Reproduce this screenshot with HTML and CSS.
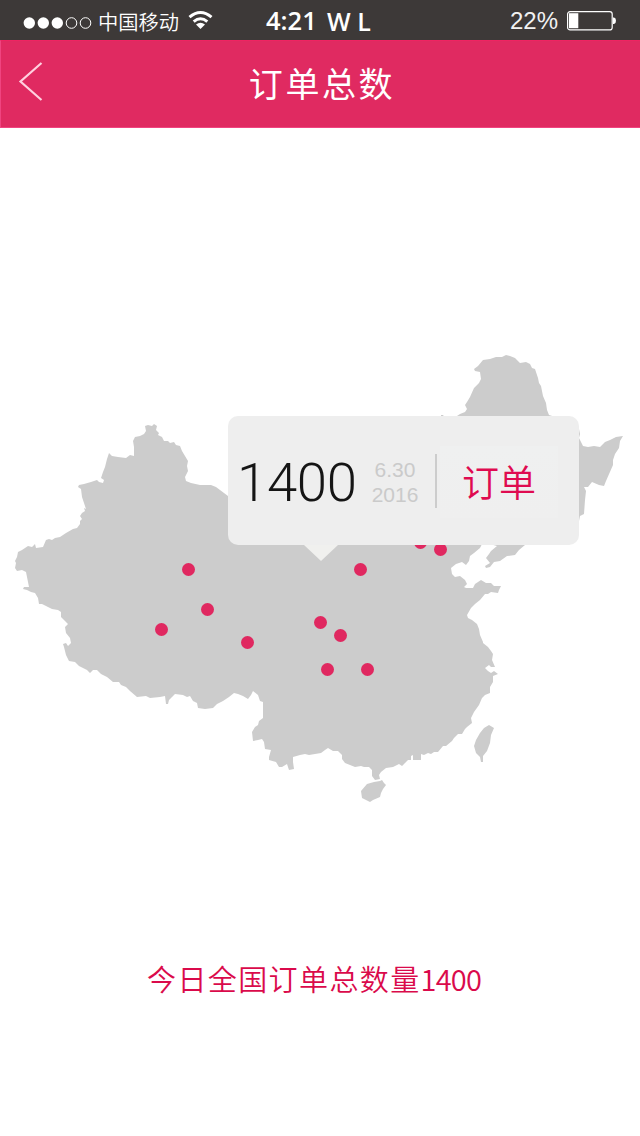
FILE: index.html
```html
<!DOCTYPE html>
<html lang="zh-CN">
<head>
<meta charset="utf-8">
<title>订单总数</title>
<link rel="stylesheet" href="styles.css">
</head>
<body>
<div class="screen">
  <div class="status">
    <svg class="signal" width="70" height="14" viewBox="0 0 70 14">
      <g fill="#fff"><circle cx="7.300" cy="7" r="5.700"/><circle cx="21.300" cy="7" r="5.700"/><circle cx="35.300" cy="7" r="5.700"/></g>
      <g fill="none" stroke="#fff"><circle cx="49.500" cy="7" r="5.300"/><circle cx="63.500" cy="7" r="5.300"/></g>
    </svg>
    <span class="carrier">中国移动</span>
    <svg class="wifi" width="26" height="20" viewBox="0 0 26 20">
      <g fill="none" stroke="#fff" stroke-width="3"><path d="M1.500 7.100Q12.500-2.200 23.500 7.100"/><path d="M5.700 11.600Q12.500 5.900 19.300 11.600"/></g>
      <path d="M8 14.500Q12.500 11 17 14.500L12.500 19Z" fill="#fff"/>
    </svg>
    <span class="time">4:21</span><span class="initials">W L</span>
    <span class="percent">22%</span>
    <svg class="battery" width="50" height="20" viewBox="0 0 50 20">
      <rect x=".6" y=".6" width="44.600" height="18.300" rx="2.500" fill="none" stroke="#fff" stroke-width="1.200"/>
      <rect x="2" y="2.200" width="9.300" height="15" fill="#fff"/>
      <path d="M46 6.500h1q2 .5 2 3.200t-2 3.300h-1z" fill="#fff"/>
    </svg>
  </div>
  <header class="header">
    <svg class="back" width="26" height="42" viewBox="0 0 26 42"><path d="M23.500 2L2.500 20.500 23.500 39" fill="none" stroke="#ffd0df" stroke-width="2.200"/></svg>
    <h1 class="title">订单总数</h1>
  </header>
  <main class="map">
    <svg class="country" width="640" height="480" viewBox="0 340 640 480">
      <g fill="#ccc">
        <path d="M15 561L17 557 18 552 22 550 25 548 28 546 32 547 35 544 36 548 43 547 46 540 49 539 52 540 55 538 60 537 66 533 73 529 77 528 80 524 80 521 82 519 80 516 82 513 85 511 84 508 86 509 84 503 82 497 81 489 78 487 79 485 84 484 91 482 97 480 99 482 103 483 104 480 101 478 103 472 105 467 107 459 109 453 112 456 118 457 126 458 130 455 134 456 134 447 133 441 135 437 140 436 144 434 146 431 145 426 148 425 152 426 154 424 157 426 156 430 159 433 158 435 162 437 164 441 168 441 170 443 174 442 176 445 180 446 182 451 185 456 188 461 187 466 188 471 185 477 186 481 191 483 200 485 211 485 216 487 220 490 228 496 250 501 300 514 350 505 400 470 442 438 441 415 443 415 449 424 457 416 460 414 465 412 467 409 465 405 467 402 470 397 474 388 479 383 481 379 480 372 475 371 474 369 478 366 483 360 490 359 496 357 502 357 506 355 510 356 515 358 520 363 526 362 530 364 532 368 535 369 538 378 539 383 541 386 543 396 546 403 547 410 549 415 565 420 579 429 580 434 579 438 583 446 588 447 594 446 600 447 605 442 610 440 616 437 623 436 620 441 619 448 615 454 613 460 613 465 606 481 604 486 599 485 592 482 588 487 584 487 586 491 585 500 584 514 580 516 579 521 560 532 525 545 519 550 515 555 507 556 500 561 494 562 490 567 486 568 485 566 490 563 486 558 489 554 491 551 497 546 483 542 480 548 474 553 470 556 469 561 466 565 462 562 456 564 451 568 452 574 455 577 460 576 465 580 467 584 464 587 466 588 473 588 475 584 481 580 486 583 491 583 494 586 501 586 499 590 498 593 491 592 488 594 485 594 480 600 475 604 471 608 467 615 468 618 472 620 477 624 479 629 480 635 483 642 483 643 488 647 491 651 493 654 492 660 495 667 491 667 489 665 485 668 488 671 491 673 494 671 498 674 493 676 493 682 490 687 490 693 485 695 482 698 479 705 474 712 471 718 472 723 467 727 465 729 462 734 458 734 454 738 452 741 446 746 443 746 438 752 434 752 431 754 428 753 424 755 421 754 421 760 413 760 413 755 411 756 411 760 408 760 405 763 402 766 399 764 393 767 386 768 381 772 379 775 380 779 375 780 372 776 372 770 369 767 364 767 361 766 355 767 350 765 345 763 342 759 342 755 338 751 333 751 328 748 325 750 321 753 315 754 309 755 305 754 300 755 293 757 293 762 294 769 289 770 287 764 282 767 279 767 276 762 269 760 269 757 271 750 265 749 264 742 262 739 258 740 253 741 252 732 255 727 258 725 259 721 263 718 263 702 260 701 258 695 253 691 251 695 248 699 243 696 238 694 234 693 229 697 223 701 217 704 213 708 205 709 198 708 197 703 193 701 190 696 187 697 183 695 175 694 172 697 169 700 168 704 166 704 165 696 160 697 150 698 146 696 137 697 130 691 126 687 121 685 119 682 113 682 107 677 101 674 97 670 93 670 90 673 87 670 79 666 75 662 69 661 66 655 64 647 63 644 66 643 68 646 71 643 70 638 66 633 65 627 68 624 65 621 61 617 61 612 58 610 52 609 46 606 42 604 39 604 38 598 35 593 31 592 27 590 23 589 24 587 29 587 28 582 26 572 22 570 17 571 15 568 16 563Z"/>
        <path d="M489 725L494 728 491 735 490 743 487 751 483 756 483 762 481 762 480 757 476 753 474 746 476 740 480 733 484 728Z"/>
        <path d="M367 784L374 782 380 781 382 780 384 783 386 785 383 789 381 793 380 797 373 800 370 802 362 798 361 791Z"/>
      </g>
      <g fill="#e02860"><circle cx="420.500" cy="542.500" r="6.500"/><circle cx="440.500" cy="549.500" r="6.500"/><circle cx="188.500" cy="569.500" r="6.500"/><circle cx="360.500" cy="569.500" r="6.500"/><circle cx="207.500" cy="609.500" r="6.500"/><circle cx="161.500" cy="629.500" r="6.500"/><circle cx="247.500" cy="642.500" r="6.500"/><circle cx="320.500" cy="622.500" r="6.500"/><circle cx="340.500" cy="635.500" r="6.500"/><circle cx="327.500" cy="669.500" r="6.500"/><circle cx="367.500" cy="669.500" r="6.500"/></g>
    </svg>
    <div class="tooltip">
      <span class="count">1400</span>
      <span class="date"><span>6.30</span><span>2016</span></span>
      <span class="divider"></span>
      <span class="label">订单</span>
    </div>
  </main>
  <p class="summary"><span>今日全国订单总数量</span><span class="total">1400</span></p>
</div>
</body>
</html>
```
FILE: styles.css
```css
* { box-sizing: border-box; }
body { margin: 0; background: #fff; font-family: "Liberation Sans", "Noto Sans CJK SC", sans-serif; }
.screen { width: 640px; height: 1136px; overflow: hidden; display: flex; flex-direction: column; }
.status { height: 40px; flex: none; background: #3d3938; color: #fff; display: flex; align-items: center; padding-left: 22px; white-space: nowrap; line-height: 40px; }
.signal { margin-top: 6px; flex: none; }
.carrier { width: 82px; margin-left: 6px; font: 350 20.300px/40px "Noto Sans CJK SC", sans-serif; padding-top: 1px; }
.wifi { margin-left: 8px; flex: none; }
.time { width: 61px; margin-left: 52px; font: 600 25.500px/40px "Open Sans", sans-serif; }
.initials { width: 183px; font: 600 25px/40px "Open Sans", sans-serif; padding-top: 1px; }
.percent { width: 57px; font-size: 24px; padding-top: 2px; color: #f2f2f2; }
.battery { flex: none; margin-top: 2px; }
.header { height: 88px; flex: none; display: flex; align-items: center; justify-content: center; position: relative; background: #e02a61; border: solid #f04480; border-width: 1px 0 1px 1px; border-top-color: #ee2462; }
.back { position: absolute; left: 17px; top: 20px; }
.title { margin: 0 0 3px; color: #fff; font: 400 34px/84px "Noto Sans CJK SC", sans-serif; letter-spacing: 2.600px; padding-left: 3px; }
.map { margin-top: 212px; height: 480px; flex: none; position: relative; }
.country { display: block; }
.tooltip { position: absolute; left: 228px; top: 76px; width: 351px; height: 129px; border-radius: 10px; background: linear-gradient(#eff0f0, #efefef) 212px 30px / 118px 72px no-repeat #eee; display: flex; align-items: center; }
.tooltip::after { content: ""; position: absolute; left: 76px; top: 129px; border: solid transparent; border-width: 16px 17.500px 0; border-top-color: #f0f0ee; }
.count { width: 136px; padding-left: 9px; color: #151515; font: 300 54.500px/60px Roboto, sans-serif; letter-spacing: -.3px; padding-top: 3px; }
.date { width: 62px; display: flex; flex-direction: column; align-items: center; font-size: 21px; line-height: 25px; color: #cacaca; padding-top: 3px; }
.divider { width: 2px; height: 54px; margin-left: 9px; background: #ccc; }
.label { margin-left: 25px; color: #df0b50; font: 350 37px/60px "Noto Sans CJK SC", sans-serif; }
.summary { margin: 136px 0 0; padding-left: 147px; display: flex; color: #da0a4b; font: 350 29px/44px "Noto Sans CJK SC", sans-serif; letter-spacing: 1.400px; }
.total { letter-spacing: -.8px; }
```
